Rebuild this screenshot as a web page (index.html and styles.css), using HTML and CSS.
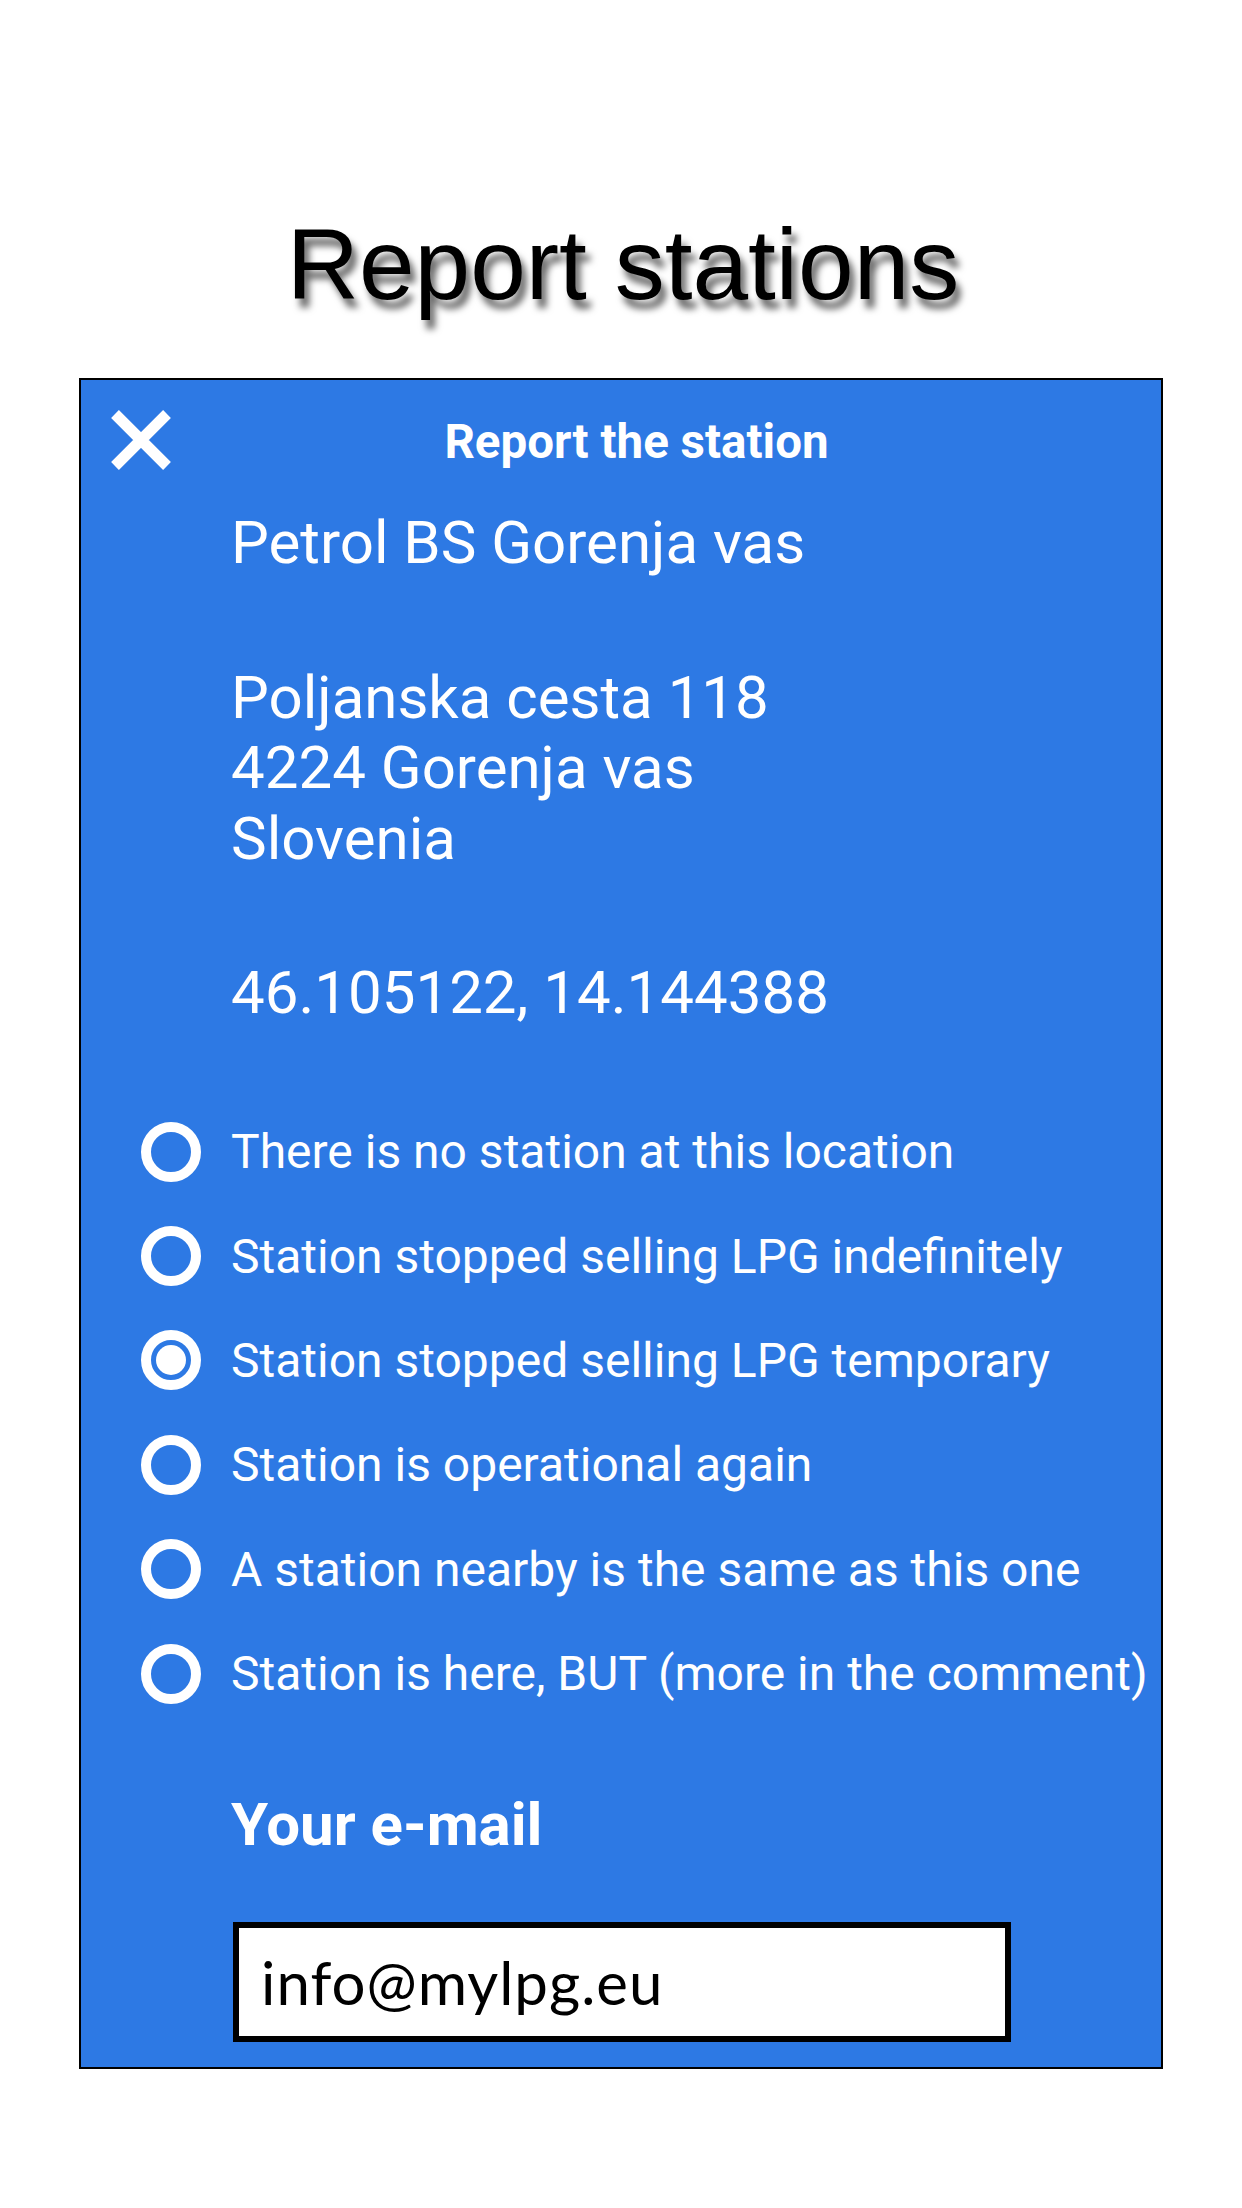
FILE: index.html
```html
<!DOCTYPE html>
<html lang="en">
<head>
    <meta charset="UTF-8">
    <meta name="viewport" content="width=device-width, initial-scale=1.0">
    <title>Report stations</title>
    <link rel="stylesheet" href="styles.css">
</head>
<body>
    <div class="page">
        <h1 class="page-title">Report stations</h1>

        <div class="report-panel">
            <div class="panel-header">
                <svg class="close-icon" viewBox="0 0 60 60" width="60" height="60">
                    <path d="M4 4 L56 56 M56 4 L4 56" stroke="#fff" stroke-width="11" fill="none"/>
                </svg>
                <div class="panel-title">Report the station</div>
            </div>

            <div class="station-info">
                <p class="station-name">Petrol BS Gorenja vas</p>
                <p class="station-address">Poljanska cesta 118<br>4224 Gorenja vas<br>Slovenia</p>
                <p class="station-coords">46.105122, 14.144388</p>
            </div>

            <div class="report-options">
                <div class="option"><span class="radio"></span><span class="option-text">There is no station at this location</span></div>
                <div class="option"><span class="radio"></span><span class="option-text">Station stopped selling LPG indefinitely</span></div>
                <div class="option"><span class="radio checked"></span><span class="option-text">Station stopped selling LPG temporary</span></div>
                <div class="option"><span class="radio"></span><span class="option-text">Station is operational again</span></div>
                <div class="option"><span class="radio"></span><span class="option-text">A station nearby is the same as this one</span></div>
                <div class="option"><span class="radio"></span><span class="option-text">Station is here, BUT (more in the comment)</span></div>
            </div>

            <div class="email-label">Your e-mail</div>
            <input class="email-input" type="text" value="info@mylpg.eu">
        </div>
    </div>
</body>
</html>
```

FILE: styles.css
```css
body {
    margin: 0;
    padding: 0;
    background-color: #fff;
    font-family: Roboto, "Liberation Sans", sans-serif;
}
.page {
    padding: 208px 79px 0;
}
.page-title {
    margin: 0 0 58px;
    padding-left: 4px;
    font-family: "Liberation Sans", Arial, sans-serif;
    font-size: 100px;
    font-weight: normal;
    line-height: 112px;
    text-align: center;
    color: #000;
    text-shadow: 5px 9px 7px rgba(0, 0, 0, 0.6);
}
.report-panel {
    background-color: #2d79e4;
    border: 2px solid #000;
    padding-bottom: 25px;
    color: #fff;
}
.panel-header {
    display: flex;
    align-items: flex-start;
    padding: 30px 59px 0 30px;
}
.close-icon {
    display: block;
    flex: none;
}
.panel-title {
    flex: 1;
    text-align: center;
    font-size: 47.5px;
    font-weight: bold;
    line-height: 64px;
}
.station-info {
    margin-top: 34px;
    padding-left: 150px;
    font-size: 60px;
    line-height: 70.5px;
}
.station-info p {
    margin: 0 0 84px;
}
.station-info p:last-child {
    margin-bottom: 0;
}
.report-options {
    margin-top: 71px;
}
.option {
    display: flex;
    align-items: center;
    height: 104.4px;
    padding-left: 60px;
}
.radio {
    position: relative;
    flex: none;
    width: 60px;
    height: 60px;
    box-sizing: border-box;
    border: 10px solid #fff;
    border-radius: 50%;
    margin-right: 30px;
}
.radio.checked::after {
    content: "";
    position: absolute;
    top: 5px;
    left: 5px;
    width: 30px;
    height: 30px;
    border-radius: 50%;
    background-color: #fff;
}
.option-text {
    font-size: 48px;
    white-space: nowrap;
}
.email-label {
    margin-top: 63px;
    padding-left: 150px;
    font-size: 60px;
    font-weight: bold;
}
.email-input {
    display: block;
    box-sizing: border-box;
    width: 778px;
    height: 120px;
    margin: 62px 0 0 152px;
    padding: 0 22px;
    border: 6px solid #000;
    border-radius: 0;
    background-color: #fff;
    color: #000;
    font-family: Lato, "Liberation Sans", sans-serif;
    font-size: 60px;
    letter-spacing: 1px;
    outline: none;
}
```
